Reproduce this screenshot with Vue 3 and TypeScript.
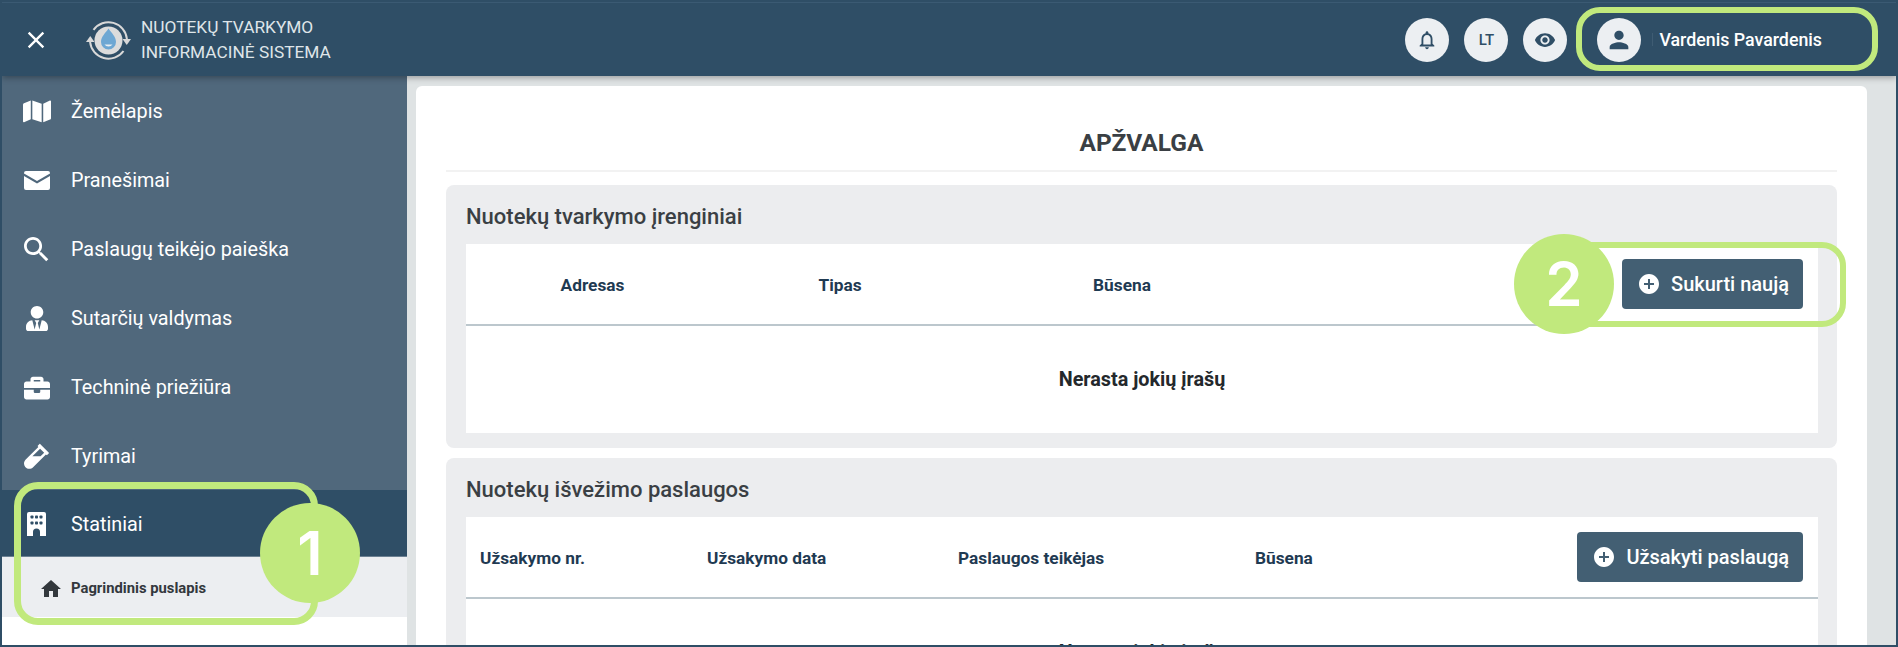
<script setup lang="ts">
interface MenuItem {
  label: string
  viewBox: string
  path: string
  width: number
}

const menu: MenuItem[] = [
  {
    label: 'Žemėlapis',
    viewBox: '0 0 576 512',
    width: 28,
    path: 'M0 117.66v346.32c0 11.32 11.43 19.06 21.94 14.86L160 416V32L20.12 87.95A32.006 32.006 0 0 0 0 117.66zM192 416l192 64V96L192 32v384zM554.06 33.16L416 96v384l139.88-55.95A31.996 31.996 0 0 0 576 394.34V48.02c0-11.32-11.43-19.06-21.94-14.86z'
  },
  {
    label: 'Pranešimai',
    viewBox: '0 0 26 19',
    width: 26,
    path: 'M2 0h22a2 2 0 0 1 2 2v.5L13 10 0 2.5V2a2 2 0 0 1 2-2zM0 5l13 7.500L26 5v12a2 2 0 0 1-2 2H2a2 2 0 0 1-2-2z'
  },
  {
    label: 'Paslaugų teikėjo paieška',
    viewBox: '3 3 18 18',
    width: 25,
    path: 'M15.5 14h-.79l-.28-.27C15.41 12.59 16 11.11 16 9.5 16 5.91 13.09 3 9.5 3S3 5.91 3 9.5 5.91 16 9.5 16c1.61 0 3.09-.59 4.23-1.57l.27.28v.79l5 4.99L20.49 19l-4.99-5zm-6 0C7.01 14 5 11.99 5 9.5S7.01 5 9.5 5 14 7.01 14 9.5 11.99 14 9.5 14z'
  },
  {
    label: 'Sutarčių valdymas',
    viewBox: '0 0 448 512',
    width: 22,
    path: 'M224 256c70.7 0 128-57.3 128-128S294.7 0 224 0 96 57.3 96 128s57.3 128 128 128zm95.8 32.6L272 480l-32-136 32-56h-96l32 56-32 136-47.8-191.4C56.9 292 0 350.3 0 422.4V464c0 26.5 21.5 48 48 48h352c26.5 0 48-21.5 48-48v-41.6c0-72.1-56.9-130.4-128.2-133.8z'
  },
  {
    label: 'Techninė priežiūra',
    viewBox: '0 0 512 512',
    width: 26,
    path: 'M320 336c0 8.84-7.16 16-16 16h-96c-8.84 0-16-7.16-16-16v-48H0v144c0 25.6 22.4 48 48 48h416c25.6 0 48-22.4 48-48V288H320v48zm144-208h-80V80c0-25.6-22.4-48-48-48H176c-25.6 0-48 22.4-48 48v48H48c-25.6 0-48 22.4-48 48v80h512v-80c0-25.6-22.4-48-48-48zm-144 0H192V96h128v32z'
  },
  {
    label: 'Tyrimai',
    viewBox: '0 0 480 512',
    width: 25,
    path: 'M477.7 186.1L309.5 18.3c-3.1-3.1-8.2-3.1-11.3 0l-34 33.9c-3.1 3.1-3.1 8.2 0 11.3l11.2 11.1L33 316.5c-38.8 38.7-45.1 102-9.4 143.5 20.6 24 49.5 36 78.4 35.9 26.4 0 52.8-10 72.9-30.1l246.3-245.7 11.2 11.1c3.1 3.1 8.2 3.1 11.3 0l34-33.9c3.1-3 3.1-8.1-.1-11.2zM318 256H161l148-147.7 78.5 78.3L318 256z'
  }
]

const plusPath = 'M12 2C6.48 2 2 6.48 2 12s4.48 10 10 10 10-4.48 10-10S17.52 2 12 2zm5 11h-4v4h-2v-4H7v-2h4V7h2v4h4v2z'
const deviceColumns = ['Adresas', 'Tipas', 'Būsena']
const orderColumns = ['Užsakymo nr.', 'Užsakymo data', 'Paslaugos teikėjas', 'Būsena']
</script>

<template>
  <div class="frame">
    <header class="topbar">
      <svg class="close-icon" viewBox="0 0 24 24"><path d="M19 6.41L17.59 5 12 10.59 6.41 5 5 6.41 10.59 12 5 17.59 6.41 19 12 13.41 17.59 19 19 17.59 13.41 12z" /></svg>
      <svg class="logo" viewBox="0 0 46 40">
        <path d="M8.500 9.900 A18.500 18.500 0 0 1 41.900 19" class="logo-arc" />
        <path d="M38.500 31 A18.500 18.500 0 0 1 5.100 22" class="logo-arc" />
        <path d="M37.500 19 L46 19 L41.750 25 Z" class="logo-tip" />
        <path d="M1 22 L9.500 22 L5.250 16 Z" class="logo-tip" />
        <circle cx="23.500" cy="20.500" r="14" fill="#dcdcdc" />
        <path d="M23.500 8.500 C26.500 13 31 16.500 31 22 A7.500 7.500 0 0 1 16 22 C16 16.500 20.500 13 23.500 8.500 Z" fill="#6ea7d3" />
        <path d="M19.500 24.500 A4.500 3.500 0 0 0 27.500 24.500 Z" fill="#e8eef2" />
      </svg>
      <div class="brand">NUOTEKŲ TVARKYMO<br />INFORMACINĖ SISTEMA</div>
      <div class="top-actions">
        <button class="round-btn">
          <svg viewBox="0 0 24 24"><path d="M12 22c1.1 0 2-.9 2-2h-4c0 1.1.9 2 2 2zm6-6v-5c0-3.07-1.64-5.64-4.5-6.32V4c0-.83-.67-1.5-1.5-1.5s-1.5.67-1.5 1.5v.68C7.63 5.36 6 7.92 6 11v5l-2 2v1h16v-1l-2-2zm-2 1H8v-6c0-2.48 1.51-4.5 4-4.5s4 2.02 4 4.5v6z" /></svg>
        </button>
        <button class="round-btn lang">LT</button>
        <button class="round-btn">
          <svg viewBox="0 0 24 24"><path d="M12 4.5C7 4.5 2.73 7.61 1 12c1.73 4.39 6 7.5 11 7.5s9.27-3.11 11-7.5c-1.73-4.39-6-7.5-11-7.5zM12 17c-2.76 0-5-2.24-5-5s2.24-5 5-5 5 2.24 5 5-2.24 5-5 5zm0-8c-1.66 0-3 1.34-3 3s1.34 3 3 3 3-1.34 3-3-1.34-3-3-3z" /></svg>
        </button>
        <button class="round-btn avatar">
          <svg viewBox="0 0 24 24"><path d="M12 12c2.21 0 4-1.79 4-4s-1.79-4-4-4-4 1.79-4 4 1.79 4 4 4zm0 2c-2.67 0-8 1.34-8 4v2h16v-2c0-2.66-5.33-4-8-4z" /></svg>
        </button>
        <span class="divider"></span>
        <span class="user-name">Vardenis Pavardenis</span>
      </div>
    </header>

    <div class="body">
      <nav class="sidebar">
        <a v-for="item in menu" :key="item.label" class="menu-item">
          <span class="menu-icon">
            <svg :viewBox="item.viewBox" :width="item.width"><path :d="item.path" /></svg>
          </span>
          {{ item.label }}
        </a>
        <a class="menu-item active">
          <span class="menu-icon">
            <svg viewBox="0 0 19 24" width="19" height="24">
              <path d="M2 0h15a2 2 0 0 1 2 2v22h-6v-4a3.500 3.500 0 0 0-7 0v4H0V2a2 2 0 0 1 2-2z" />
              <g fill="#2f4e66">
                <rect x="3.500" y="3.500" width="3" height="3" rx=".8" />
                <rect x="8" y="3.500" width="3" height="3" rx=".8" />
                <rect x="12.500" y="3.500" width="3" height="3" rx=".8" />
                <rect x="3.500" y="9.500" width="3" height="3" rx=".8" />
                <rect x="8" y="9.500" width="3" height="3" rx=".8" />
                <rect x="12.500" y="9.500" width="3" height="3" rx=".8" />
              </g>
            </svg>
          </span>
          Statiniai
        </a>
        <a class="sub-item">
          <svg viewBox="2 3 20 17" width="20"><path d="M10 20v-6h4v6h5v-8h3L12 3 2 12h3v8z" /></svg>
          Pagrindinis puslapis
        </a>
      </nav>

      <main class="main">
        <div class="card">
          <h1 class="page-title">APŽVALGA</h1>

          <section class="panel">
            <h2 class="panel-title">Nuotekų tvarkymo įrenginiai</h2>
            <div class="table">
              <div class="table-head devices">
                <span v-for="col in deviceColumns" :key="col">{{ col }}</span>
                <button class="add-btn">
                  <svg viewBox="2 2 20 20"><path :d="plusPath" /></svg>
                  Sukurti naują
                </button>
              </div>
              <div class="empty">Nerasta jokių įrašų</div>
            </div>
          </section>

          <section class="panel">
            <h2 class="panel-title">Nuotekų išvežimo paslaugos</h2>
            <div class="table">
              <div class="table-head orders">
                <span v-for="col in orderColumns" :key="col">{{ col }}</span>
                <button class="add-btn">
                  <svg viewBox="2 2 20 20"><path :d="plusPath" /></svg>
                  Užsakyti paslaugą
                </button>
              </div>
              <div class="empty">Nerasta jokių įrašų</div>
            </div>
          </section>
        </div>
      </main>
    </div>

    <!-- anotacijos ant ekrano -->
    <div class="mark mark-user"></div>
    <div class="mark mark-menu"></div>
    <div class="mark mark-create"></div>
    <div class="step step-one">1</div>
    <div class="step step-two">2</div>
  </div>
</template>

<style>
html,
body {
  margin: 0;
  background: #2f4e66;
}
</style>

<style scoped>
.frame {
  position: relative;
  width: 1898px;
  height: 647px;
  box-sizing: border-box;
  border: 2px solid #2f4e66;
  overflow: hidden;
  font-family: Roboto, "Noto Sans", sans-serif;
  background: #fff;
}

.topbar {
  position: relative;
  z-index: 2;
  display: flex;
  align-items: center;
  height: 74px;
  box-sizing: border-box;
  border-top: 1px solid #3b5a73;
  background: #2f4e66;
  box-shadow: 0 2px 6px rgba(0, 0, 0, 0.3);
}

.close-icon {
  width: 28px;
  height: 28px;
  margin-left: 20px;
  fill: #fff;
}

.logo {
  width: 46px;
  height: 40px;
  margin-left: 35px;
  flex-shrink: 0;
}

.logo-arc {
  fill: none;
  stroke: #d8d8d8;
  stroke-width: 2;
}

.logo-tip {
  fill: #d8d8d8;
}

.brand {
  margin-left: 10px;
  color: #dfe5e9;
  font-size: 17.3px;
  line-height: 25px;
}

.top-actions {
  display: flex;
  align-items: center;
  margin-left: auto;
  padding-right: 74px;
}

.round-btn {
  display: flex;
  align-items: center;
  justify-content: center;
  width: 44px;
  height: 44px;
  margin-left: 15px;
  padding: 0;
  border: none;
  border-radius: 50%;
  background: #eceff2;
  font-family: inherit;
}

.round-btn svg {
  width: 22px;
  height: 22px;
  fill: #2f4e66;
}

.round-btn.lang {
  color: #2f4e66;
  font-size: 15px;
  font-weight: 500;
}

.round-btn.avatar {
  margin-left: 30px;
}

.round-btn.avatar svg {
  width: 28px;
  height: 28px;
}

.divider {
  width: 1px;
  height: 13px;
  margin: 0 6px 0 11px;
  background: #3f5c73;
}

.user-name {
  color: #fff;
  font-size: 17.8px;
  font-weight: 500;
}

.body {
  display: flex;
  height: 569px;
}

.sidebar {
  display: flex;
  flex-direction: column;
  flex: 0 0 405px;
  background: #fff;
}

.menu-item {
  display: flex;
  align-items: center;
  flex: 0 0 69px;
  box-sizing: border-box;
  padding-top: 2px;
  background: #50687c;
  color: #fff;
  font-size: 19.8px;
}

.menu-item svg {
  display: block;
  fill: #fff;
}

.menu-icon {
  display: flex;
  justify-content: center;
  width: 69px;
  flex-shrink: 0;
}

.menu-item.active {
  flex-basis: 67px;
  background: #2f4e66;
  border-bottom: 1px solid #6b8092;
}

.sub-item {
  display: flex;
  align-items: center;
  gap: 10px;
  height: 60px;
  box-sizing: border-box;
  padding: 2px 0 0 39px;
  background: #eceef1;
  color: #33383d;
  font-size: 14.8px;
  font-weight: 700;
}

.sub-item svg {
  fill: #33383d;
}

.main {
  flex: 1;
  min-width: 0;
  padding: 10px 29px 0 9px;
  background: #dfe3e4;
}

.card {
  padding: 0 30px;
  border-radius: 6px 6px 0 0;
  background: #fff;
}

.page-title {
  height: 86px;
  margin: 0 0 13px;
  padding-top: 30px;
  box-sizing: border-box;
  border-bottom: 2px solid #f2f2f2;
  color: #3a3f44;
  font-size: 24.5px;
  font-weight: 700;
  line-height: 54px;
  text-align: center;
}

.panel {
  margin-bottom: 10px;
  padding: 0 19px 15px 20px;
  border-radius: 8px;
  background: #ecedef;
}

.panel-title {
  height: 59px;
  margin: 0;
  padding-top: 5px;
  box-sizing: border-box;
  color: #3a3f44;
  font-size: 22px;
  font-weight: 500;
  line-height: 54px;
}

.table {
  background: #fff;
}

.table-head {
  display: grid;
  align-items: center;
  height: 82px;
  box-sizing: border-box;
  border-bottom: 2px solid #bcc7cd;
  color: #1f3a52;
  font-size: 17.3px;
  font-weight: 700;
}

.table-head span {
  padding-top: 1px;
}

.table-head.devices {
  grid-template-columns: 253px 242px 322px 1fr;
}

.table-head.devices span {
  text-align: center;
}

.table-head.orders {
  grid-template-columns: 241px 251px 297px 100px 1fr;
}

.table-head.orders span:first-child {
  padding-left: 14px;
}

.add-btn {
  display: flex;
  align-items: center;
  justify-self: end;
  gap: 12px;
  height: 50px;
  margin-right: 15px;
  padding: 0 14px 0 17px;
  border: none;
  border-radius: 4px;
  background: #435f73;
  color: #fff;
  font-family: inherit;
  font-size: 20px;
  font-weight: 500;
  white-space: nowrap;
}

.add-btn svg {
  width: 20px;
  height: 20px;
  fill: #fff;
}

.empty {
  display: flex;
  align-items: center;
  justify-content: center;
  height: 107px;
  color: #24282c;
  font-size: 19.8px;
  font-weight: 700;
}

.mark {
  position: absolute;
  z-index: 3;
  box-sizing: border-box;
  border: 6px solid #c1e97d;
}

.mark-user {
  left: 1574px;
  top: 5px;
  width: 302px;
  height: 64px;
  border-radius: 24px;
}

.mark-menu {
  left: 12px;
  top: 480px;
  width: 304px;
  height: 143px;
  border-width: 7px;
  border-radius: 24px;
}

.mark-create {
  left: 1562px;
  top: 240px;
  width: 282px;
  height: 85px;
  border-radius: 24px;
}

.step {
  position: absolute;
  z-index: 4;
  display: flex;
  align-items: center;
  justify-content: center;
  width: 100px;
  height: 100px;
  border-radius: 50%;
  background: #c1e97d;
  color: #fff;
  font-family: Inter, sans-serif;
  font-size: 60px;
  font-weight: 600;
}

.step-one {
  left: 258px;
  top: 501px;
}

.step-two {
  left: 1512px;
  top: 232px;
}
</style>
